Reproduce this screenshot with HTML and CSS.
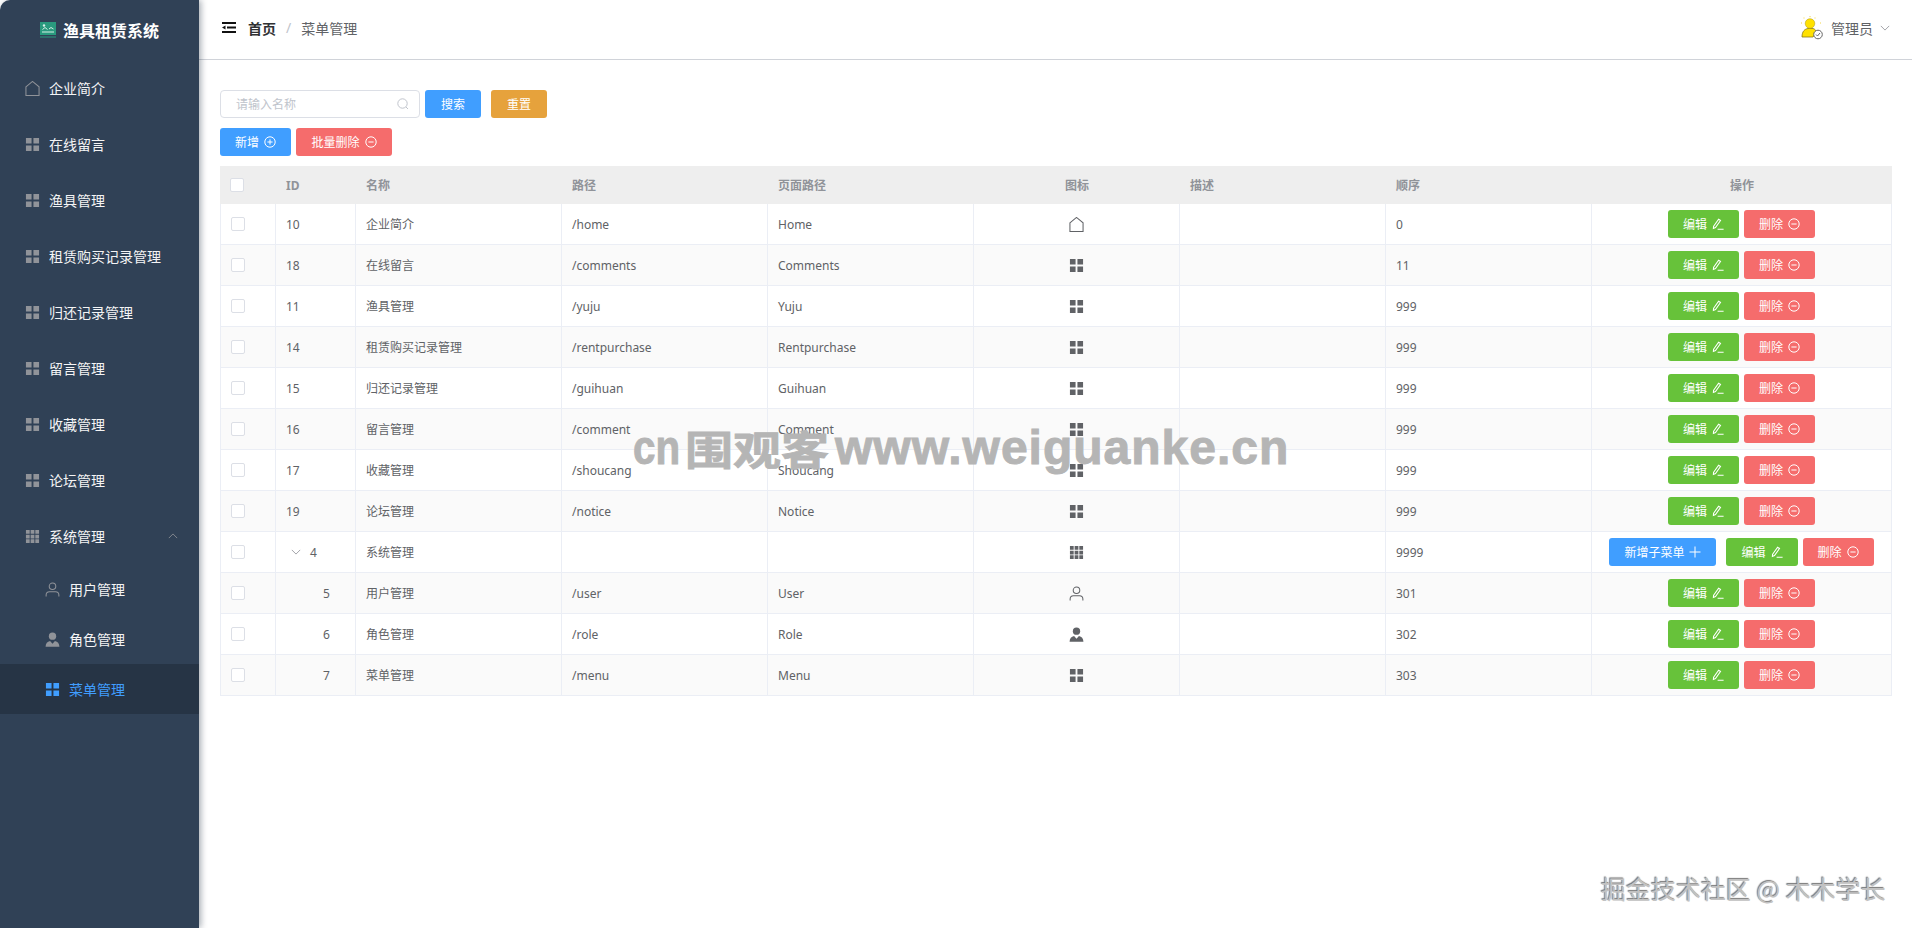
FILE: index.html
```html
<!doctype html>
<html lang="zh-CN">
<head>
  <meta charset="UTF-8">
  <title>渔具租赁系统</title>
  <link rel="stylesheet" href="styles.css">
</head>
<body>
  <svg class="defs" width="0" height="0">
    <symbol id="i-house" viewBox="0 0 16 16"><path d="M1 6.200 8 .5l7 5.700v9.300H1z" fill="none" stroke="currentColor" stroke-width="1.1"/></symbol>
    <symbol id="i-menu" viewBox="0 0 16 16"><path d="M1 1h6v6H1zM9 1h6v6H9zM1 9h6v6H1zM9 9h6v6H9z" fill="currentColor"/></symbol>
    <symbol id="i-grid" viewBox="0 0 16 16"><path d="M1 1h4v4H1zM6 1h4v4H6zM11 1h4v4h-4zM1 6h4v4H1zM6 6h4v4H6zM11 6h4v4h-4zM1 11h4v4H1zM6 11h4v4H6zM11 11h4v4h-4z" fill="currentColor"/></symbol>
    <symbol id="i-user" viewBox="0 0 16 16"><circle cx="8" cy="4.600" r="3.500" fill="none" stroke="currentColor" stroke-width="1.100"/><path d="M1.200 15.500v-1.700c0-2.300 1.600-3.500 3.600-3.500h6.400c2 0 3.600 1.200 3.600 3.500v1.700" fill="none" stroke="currentColor" stroke-width="1.100"/></symbol>
    <symbol id="i-custom" viewBox="0 0 16 16"><circle cx="8" cy="4.400" r="3.900" fill="currentColor"/><path d="M0.600 15.600c.2-3.400 1.800-5.300 4.800-6L8 12.400l2.600-2.800c3 .7 4.600 2.600 4.800 6z" fill="currentColor"/></symbol>
    <symbol id="i-plus-c" viewBox="0 0 12 12"><circle cx="6" cy="6" r="5.200" fill="none" stroke="currentColor"/><path d="M3.400 6h5.200M6 3.400v5.200" stroke="currentColor"/></symbol>
    <symbol id="i-minus-c" viewBox="0 0 12 12"><circle cx="6" cy="6" r="5.200" fill="none" stroke="currentColor"/><path d="M3.400 6h5.200" stroke="currentColor"/></symbol>
    <symbol id="i-edit" viewBox="0 0 12 12"><path d="M1.600 8.200 6.600 1.200l1.900 1.300-5 7-2.100.9zM5.600 11.300h6" fill="none" stroke="currentColor" stroke-width="1.100"/></symbol>
    <symbol id="i-plus" viewBox="0 0 12 12"><path d="M.5 6h11M6 .5v11" stroke="currentColor"/></symbol>
    <symbol id="i-down" viewBox="0 0 12 12"><path d="M1 3.500 6 8.500l5-5" fill="none" stroke="currentColor"/></symbol>
    <symbol id="i-up" viewBox="0 0 12 12"><path d="M1 8.500 6 3.500l5 5" fill="none" stroke="currentColor"/></symbol>
  </svg>

  <div class="layout">
    <aside class="sidebar">
      <div class="logo">
        <svg class="logo-icon" viewBox="0 0 16 16">
          <path d="M0 0h16v13H0z" fill="#2a9a7e"/>
          <path d="M0 14.500h16v1H0z" fill="#2a9a7e"/>
          <path d="M2 10h12M2.500 7.500l2.500-2 2.500 2M9 7l2-1.500L13.500 7" fill="none" stroke="#d6efe6"/>
          <circle cx="4" cy="3.500" r="1.200" fill="#d6efe6"/>
        </svg>
        <span>渔具租赁系统</span>
      </div>
      <nav class="nav">
        <a class="nav-item"><svg class="nav-icon"><use href="#i-house"/></svg>企业简介</a>
        <a class="nav-item"><svg class="nav-icon"><use href="#i-menu"/></svg>在线留言</a>
        <a class="nav-item"><svg class="nav-icon"><use href="#i-menu"/></svg>渔具管理</a>
        <a class="nav-item"><svg class="nav-icon"><use href="#i-menu"/></svg>租赁购买记录管理</a>
        <a class="nav-item"><svg class="nav-icon"><use href="#i-menu"/></svg>归还记录管理</a>
        <a class="nav-item"><svg class="nav-icon"><use href="#i-menu"/></svg>留言管理</a>
        <a class="nav-item"><svg class="nav-icon"><use href="#i-menu"/></svg>收藏管理</a>
        <a class="nav-item"><svg class="nav-icon"><use href="#i-menu"/></svg>论坛管理</a>
        <a class="nav-item"><svg class="nav-icon"><use href="#i-grid"/></svg>系统管理<svg class="nav-arrow"><use href="#i-up"/></svg></a>
        <a class="nav-sub"><svg class="nav-icon"><use href="#i-user"/></svg>用户管理</a>
        <a class="nav-sub"><svg class="nav-icon"><use href="#i-custom"/></svg>角色管理</a>
        <a class="nav-sub active"><svg class="nav-icon"><use href="#i-menu"/></svg>菜单管理</a>
      </nav>
    </aside>

    <div class="right">
      <header class="header">
        <div class="crumbs">
          <svg class="fold" viewBox="0 0 14 11"><path d="M0 0h14v2H0zM5 4.500h9v2H5zM0 9h14v2H0zM0 5.500l3.500-2v4z" fill="#111"/></svg>
          <span class="crumb-home">首页</span>
          <span class="crumb-sep">/</span>
          <span class="crumb-page">菜单管理</span>
        </div>
        <div class="account">
          <svg class="avatar" viewBox="0 0 24 24">
            <path d="M2 21c0-6 3-8 6-8.500h5c2 .5 3 2 3.500 3.500L13 21z" fill="#ffe100" stroke="#8a7a10" stroke-width=".8"/>
            <circle cx="10" cy="7.500" r="4.800" fill="#ffe100" stroke="#a8951a" stroke-width=".5"/>
            <circle cx="18" cy="18.500" r="4.300" fill="#fff" stroke="#666"/>
            <path d="M16 18.500l1.500 1.500 2.500-3" fill="none" stroke="#666"/>
            <path d="M4 1.500v1M10 0v1.200M15 1.500v1M1 7h1M20 7h1" stroke="#f2d64b"/>
          </svg>
          <span>管理员</span>
          <svg class="account-arrow"><use href="#i-down"/></svg>
        </div>
      </header>

      <main class="content">
        <div class="toolbar">
          <div class="search">
            <span class="search-text">请输入名称</span>
            <svg class="search-icon" viewBox="0 0 12 12"><circle cx="5.500" cy="5.500" r="4.700" fill="none" stroke="currentColor"/><path d="M9 9l2 2" stroke="currentColor"/></svg>
          </div>
          <button class="btn btn-primary btn-search">搜索</button>
          <button class="btn btn-warning btn-search btn-reset">重置</button>
        </div>
        <div class="toolbar">
          <button class="btn btn-primary">新增<svg class="btn-icon"><use href="#i-plus-c"/></svg></button>
          <button class="btn btn-danger btn-batch">批量删除<svg class="btn-icon"><use href="#i-minus-c"/></svg></button>
        </div>

        <table class="table">
          <colgroup>
            <col class="col-check"><col class="col-id">
            <col class="col-text"><col class="col-text"><col class="col-text"><col class="col-text"><col class="col-text"><col class="col-text">
            <col class="col-ops">
          </colgroup>
          <thead>
            <tr>
              <th><span class="check"></span></th>
              <th>ID</th>
              <th>名称</th>
              <th>路径</th>
              <th>页面路径</th>
              <th class="center">图标</th>
              <th>描述</th>
              <th>顺序</th>
              <th class="center">操作</th>
            </tr>
          </thead>
          <tbody>
            <tr>
              <td><span class="check"></span></td><td>10</td><td>企业简介</td><td>/home</td><td>Home</td>
              <td class="center"><svg class="cell-icon"><use href="#i-house"/></svg></td><td></td><td>0</td>
              <td><div class="ops"><button class="btn btn-success">编辑<svg class="btn-icon"><use href="#i-edit"/></svg></button><button class="btn btn-danger">删除<svg class="btn-icon"><use href="#i-minus-c"/></svg></button></div></td>
            </tr>
            <tr>
              <td><span class="check"></span></td><td>18</td><td>在线留言</td><td>/comments</td><td>Comments</td>
              <td class="center"><svg class="cell-icon"><use href="#i-menu"/></svg></td><td></td><td>11</td>
              <td><div class="ops"><button class="btn btn-success">编辑<svg class="btn-icon"><use href="#i-edit"/></svg></button><button class="btn btn-danger">删除<svg class="btn-icon"><use href="#i-minus-c"/></svg></button></div></td>
            </tr>
            <tr>
              <td><span class="check"></span></td><td>11</td><td>渔具管理</td><td>/yuju</td><td>Yuju</td>
              <td class="center"><svg class="cell-icon"><use href="#i-menu"/></svg></td><td></td><td>999</td>
              <td><div class="ops"><button class="btn btn-success">编辑<svg class="btn-icon"><use href="#i-edit"/></svg></button><button class="btn btn-danger">删除<svg class="btn-icon"><use href="#i-minus-c"/></svg></button></div></td>
            </tr>
            <tr>
              <td><span class="check"></span></td><td>14</td><td>租赁购买记录管理</td><td>/rentpurchase</td><td>Rentpurchase</td>
              <td class="center"><svg class="cell-icon"><use href="#i-menu"/></svg></td><td></td><td>999</td>
              <td><div class="ops"><button class="btn btn-success">编辑<svg class="btn-icon"><use href="#i-edit"/></svg></button><button class="btn btn-danger">删除<svg class="btn-icon"><use href="#i-minus-c"/></svg></button></div></td>
            </tr>
            <tr>
              <td><span class="check"></span></td><td>15</td><td>归还记录管理</td><td>/guihuan</td><td>Guihuan</td>
              <td class="center"><svg class="cell-icon"><use href="#i-menu"/></svg></td><td></td><td>999</td>
              <td><div class="ops"><button class="btn btn-success">编辑<svg class="btn-icon"><use href="#i-edit"/></svg></button><button class="btn btn-danger">删除<svg class="btn-icon"><use href="#i-minus-c"/></svg></button></div></td>
            </tr>
            <tr>
              <td><span class="check"></span></td><td>16</td><td>留言管理</td><td>/comment</td><td>Comment</td>
              <td class="center"><svg class="cell-icon"><use href="#i-menu"/></svg></td><td></td><td>999</td>
              <td><div class="ops"><button class="btn btn-success">编辑<svg class="btn-icon"><use href="#i-edit"/></svg></button><button class="btn btn-danger">删除<svg class="btn-icon"><use href="#i-minus-c"/></svg></button></div></td>
            </tr>
            <tr>
              <td><span class="check"></span></td><td>17</td><td>收藏管理</td><td>/shoucang</td><td>Shoucang</td>
              <td class="center"><svg class="cell-icon"><use href="#i-menu"/></svg></td><td></td><td>999</td>
              <td><div class="ops"><button class="btn btn-success">编辑<svg class="btn-icon"><use href="#i-edit"/></svg></button><button class="btn btn-danger">删除<svg class="btn-icon"><use href="#i-minus-c"/></svg></button></div></td>
            </tr>
            <tr>
              <td><span class="check"></span></td><td>19</td><td>论坛管理</td><td>/notice</td><td>Notice</td>
              <td class="center"><svg class="cell-icon"><use href="#i-menu"/></svg></td><td></td><td>999</td>
              <td><div class="ops"><button class="btn btn-success">编辑<svg class="btn-icon"><use href="#i-edit"/></svg></button><button class="btn btn-danger">删除<svg class="btn-icon"><use href="#i-minus-c"/></svg></button></div></td>
            </tr>
            <tr>
              <td><span class="check"></span></td>
              <td><span class="tree"><svg class="tree-arrow"><use href="#i-down"/></svg>4</span></td>
              <td>系统管理</td><td></td><td></td>
              <td class="center"><svg class="cell-icon"><use href="#i-grid"/></svg></td><td></td><td>9999</td>
              <td><div class="ops"><button class="btn btn-primary btn-child">新增子菜单<svg class="btn-icon"><use href="#i-plus"/></svg></button><button class="btn btn-success">编辑<svg class="btn-icon"><use href="#i-edit"/></svg></button><button class="btn btn-danger">删除<svg class="btn-icon"><use href="#i-minus-c"/></svg></button></div></td>
            </tr>
            <tr>
              <td><span class="check"></span></td><td class="child">5</td><td>用户管理</td><td>/user</td><td>User</td>
              <td class="center"><svg class="cell-icon"><use href="#i-user"/></svg></td><td></td><td>301</td>
              <td><div class="ops"><button class="btn btn-success">编辑<svg class="btn-icon"><use href="#i-edit"/></svg></button><button class="btn btn-danger">删除<svg class="btn-icon"><use href="#i-minus-c"/></svg></button></div></td>
            </tr>
            <tr>
              <td><span class="check"></span></td><td class="child">6</td><td>角色管理</td><td>/role</td><td>Role</td>
              <td class="center"><svg class="cell-icon"><use href="#i-custom"/></svg></td><td></td><td>302</td>
              <td><div class="ops"><button class="btn btn-success">编辑<svg class="btn-icon"><use href="#i-edit"/></svg></button><button class="btn btn-danger">删除<svg class="btn-icon"><use href="#i-minus-c"/></svg></button></div></td>
            </tr>
            <tr>
              <td><span class="check"></span></td><td class="child">7</td><td>菜单管理</td><td>/menu</td><td>Menu</td>
              <td class="center"><svg class="cell-icon"><use href="#i-menu"/></svg></td><td></td><td>303</td>
              <td><div class="ops"><button class="btn btn-success">编辑<svg class="btn-icon"><use href="#i-edit"/></svg></button><button class="btn btn-danger">删除<svg class="btn-icon"><use href="#i-minus-c"/></svg></button></div></td>
            </tr>
          </tbody>
        </table>
      </main>
    </div>
  </div>

  <div class="mark-center"><span class="mark-cn">cn</span><span class="mark-cjk">围观客</span><span class="mark-url">www.weiguanke.cn</span></div>
  <div class="mark-corner">掘金技术社区 @ 木木学长</div>
</body>
</html>
```

FILE: styles.css
```css
* {
  box-sizing: border-box;
}
html, body {
  height: 100%;
}
body {
  margin: 0;
  overflow: hidden;
  background: #fff;
  color: #606266;
  font-family: "Noto Sans", "Noto Sans CJK SC", sans-serif;
  font-size: 12px;
}
.defs {
  position: absolute;
}
.layout {
  display: flex;
  height: 928px;
}

/* sidebar */
.sidebar {
  width: 199px;
  flex-shrink: 0;
  background: #304156;
  border-top-left-radius: 10px;
  box-shadow: 2px 0 6px rgba(0, 21, 41, 0.35);
  position: relative;
}
.logo {
  height: 60px;
  display: flex;
  align-items: center;
  justify-content: center;
  gap: 7px;
  color: #fff;
  font-size: 16px;
  font-weight: 700;
}
.logo-icon {
  width: 16px;
  height: 16px;
}
.nav-item, .nav-sub {
  display: flex;
  align-items: center;
  color: #f4f4f5;
  font-size: 14px;
}
.nav-item {
  height: 56px;
  padding-left: 25px;
}
.nav-sub {
  height: 50px;
  padding-left: 45px;
}
.nav-sub.active {
  background: #263445;
  color: #409eff;
}
.nav-icon {
  width: 15px;
  height: 15px;
  margin-right: 9px;
  color: #909399;
}
.active .nav-icon {
  color: #409eff;
}
.nav-arrow {
  width: 10px;
  height: 10px;
  margin-left: auto;
  margin-right: 21px;
  color: #909399;
}

/* top bar */
.right {
  flex: 1;
  min-width: 0;
}
.header {
  height: 60px;
  padding: 0 22px 4px 23px;
  display: flex;
  align-items: center;
  justify-content: space-between;
  border-bottom: 1px solid #d0d3d9;
  font-size: 14px;
}
.crumbs {
  display: flex;
  align-items: center;
}
.fold {
  width: 14px;
  height: 11px;
  margin-right: 12px;
}
.crumb-home {
  color: #303133;
  font-weight: 700;
}
.crumb-sep {
  margin: 0 10px;
  color: #c0c4cc;
}
.account {
  display: flex;
  align-items: center;
}
.avatar {
  width: 24px;
  height: 24px;
  margin-right: 7px;
}
.account-arrow {
  width: 10px;
  height: 10px;
  margin-left: 7px;
  color: #909399;
}

/* content */
.content {
  padding: 30px 20px 0 21px;
}
.toolbar {
  display: flex;
  gap: 5px;
  margin-bottom: 10px;
}
.search {
  width: 200px;
  height: 28px;
  padding: 0 10px 0 15px;
  display: flex;
  align-items: center;
  justify-content: space-between;
  border: 1px solid #dcdfe6;
  border-radius: 4px;
  color: #c0c4cc;
}
.search-icon {
  width: 12px;
  height: 12px;
}
.btn {
  height: 28px;
  padding: 0 15px;
  display: inline-flex;
  align-items: center;
  justify-content: center;
  border: none;
  border-radius: 3px;
  color: #fff;
  font: inherit;
  white-space: nowrap;
}
.btn-primary {
  background: #409eff;
}
.btn-warning {
  background: #e6a23c;
}
.btn-success {
  background: #67c23a;
}
.btn-danger {
  background: #f56c6c;
}
.btn-search {
  width: 56px;
}
.btn-reset {
  margin-left: 5px;
}
.btn-batch {
  width: 96px;
}
.btn-icon {
  width: 12px;
  height: 12px;
  margin-left: 5px;
}
.btn-child {
  margin-right: 5px;
}

/* table */
.table {
  width: 1672px;
  table-layout: fixed;
  border-collapse: separate;
  border-spacing: 0;
}
.col-check {
  width: 56px;
}
.col-id {
  width: 80px;
}
.col-text {
  width: 206px;
}
.col-ops {
  width: 300px;
}
.table th {
  height: 38px;
  padding: 0 10px;
  background: #eeeeee;
  color: #909399;
  font-weight: 700;
  text-align: left;
}
.table td {
  height: 41px;
  padding: 0 10px;
  border-right: 1px solid #ebeef5;
  border-bottom: 1px solid #ebeef5;
  white-space: nowrap;
}
.table td:first-child {
  border-left: 1px solid #ebeef5;
}
.table tbody tr:nth-child(even) td {
  background: #fafafa;
}
.table .center {
  text-align: center;
}
.check {
  display: block;
  width: 14px;
  height: 14px;
  background: #fff;
  border: 1px solid #dcdfe6;
  border-radius: 2px;
}
.cell-icon {
  display: block;
  width: 15px;
  height: 15px;
  margin: 0 auto;
}
.tree {
  display: flex;
  align-items: center;
}
.tree-arrow {
  width: 10px;
  height: 10px;
  margin: 0 9px 0 5px;
  color: #909399;
}
.table .child {
  padding-left: 47px;
}
.ops {
  display: flex;
  justify-content: center;
  gap: 5px;
}

/* watermarks, laid over the page */
.mark-center {
  position: absolute;
  left: 633px;
  top: 415px;
  display: flex;
  align-items: baseline;
  color: #b5b5b5;
  font-family: "Liberation Sans", sans-serif;
  font-size: 48px;
  font-weight: 700;
  line-height: 56px;
  white-space: nowrap;
  -webkit-text-stroke: 1px #b5b5b5;
}
.mark-cn {
  display: inline-block;
  width: 52px;
  transform: scaleX(0.84);
  transform-origin: left;
}
.mark-cjk {
  display: inline-block;
  width: 150px;
  font-family: "Noto Sans CJK SC", sans-serif;
  font-weight: 700;
  transform: scaleY(0.84);
  transform-origin: bottom;
}
.mark-url {
  letter-spacing: 1px;
}
.mark-corner {
  position: absolute;
  left: 1601px;
  top: 870px;
  color: #c2c2c2;
  font-family: "Noto Sans CJK SC", sans-serif;
  font-size: 25px;
  text-shadow: -1px -1px 1px #777, 1px 1px 1px #fff;
  white-space: nowrap;
}
```
